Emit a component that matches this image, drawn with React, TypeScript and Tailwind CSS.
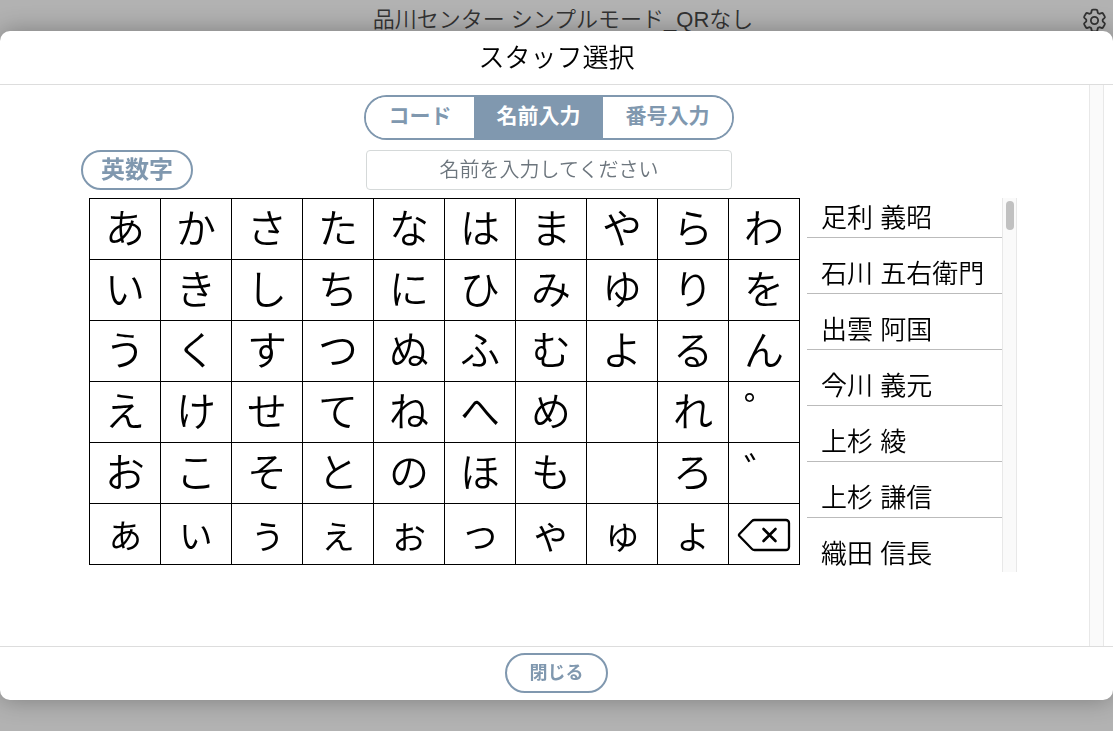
import { useState } from "react";
import { HiOutlineCog6Tooth } from "react-icons/hi2";

const KANA_ROWS = [
  ["あ", "か", "さ", "た", "な", "は", "ま", "や", "ら", "わ"],
  ["い", "き", "し", "ち", "に", "ひ", "み", "ゆ", "り", "を"],
  ["う", "く", "す", "つ", "ぬ", "ふ", "む", "よ", "る", "ん"],
  ["え", "け", "せ", "て", "ね", "へ", "め", "", "れ", "゜"],
  ["お", "こ", "そ", "と", "の", "ほ", "も", "", "ろ", "゛"],
  ["ぁ", "ぃ", "ぅ", "ぇ", "ぉ", "っ", "ゃ", "ゅ", "ょ", "BS"],
];

const STAFF = [
  "足利 義昭",
  "石川 五右衛門",
  "出雲 阿国",
  "今川 義元",
  "上杉 綾",
  "上杉 謙信",
  "織田 信長",
];

const TABS = [
  { label: "コード", width: "w-[108px]" },
  { label: "名前入力", width: "w-[129px]" },
  { label: "番号入力", width: "w-[129px]" },
];

function BackspaceIcon() {
  return (
    <svg
      width="54"
      height="36"
      viewBox="0 0 54 36"
      fill="none"
      stroke="currentColor"
      strokeWidth="2.3"
      strokeLinejoin="round"
      strokeLinecap="round"
    >
      <path d="M17.5 4H49a3 3 0 0 1 3 3V31a3 3 0 0 1-3 3H17.500Q16 34 15 33L2.400 20Q1.500 19 2.400 18L15 5Q16 4 17.500 4Z" />
      <path d="M26.500 13 38.500 25M38.500 13 26.500 25" strokeWidth="2.600" />
    </svg>
  );
}

function ModeTabs({ active, onChange }: { active: number; onChange: (i: number) => void }) {
  return (
    <div className="flex h-[45px] overflow-hidden rounded-full border-2 border-[#8098af]">
      {TABS.map((tab, i) => (
        <button
          key={tab.label}
          type="button"
          onClick={() => onChange(i)}
          className={`${tab.width} pb-1 text-[21px] font-bold ${
            i === active ? "bg-[#8098af] text-white" : "bg-white text-[#8098af]"
          }`}
        >
          {tab.label}
        </button>
      ))}
    </div>
  );
}

function KanaTable({ onKey }: { onKey: (key: string) => void }) {
  return (
    <table className="border-collapse">
      <tbody>
        {KANA_ROWS.map((row, r) => (
          <tr key={r}>
            {row.map((kana, c) => (
              <td key={c} className="h-[61px] w-[71px] border border-black p-0">
                {kana && (
                  <button
                    type="button"
                    aria-label={kana === "BS" ? "一文字削除" : undefined}
                    onClick={() => onKey(kana)}
                    className="flex h-[60px] w-[70px] items-center justify-center text-[40px] leading-none"
                  >
                    {kana === "BS" ? <BackspaceIcon /> : kana}
                  </button>
                )}
              </td>
            ))}
          </tr>
        ))}
      </tbody>
    </table>
  );
}

function StaffList({ onSelect }: { onSelect: (name: string) => void }) {
  return (
    <div className="flex h-[374px]">
      <ul className="flex w-[195px] flex-col gap-4 overflow-hidden">
        {STAFF.map((name) => (
          <li key={name} className="shrink-0 border-b border-[#bbbbbb]">
            <button
              type="button"
              onClick={() => onSelect(name)}
              className="block h-[39px] w-full pl-[14px] text-left text-[26px] leading-[41px]"
            >
              {name}
            </button>
          </li>
        ))}
      </ul>
      <div className="w-[15px] border-x border-[#e8e8e8] bg-[#fafafa] px-[3px] pt-[3px]">
        <div className="h-[29px] w-2 rounded-full bg-[#c1c1c1]" />
      </div>
    </div>
  );
}

export default function App() {
  const [tab, setTab] = useState(1);
  const [name, setName] = useState("");

  const handleKey = (key: string) => {
    setName((prev) => (key === "BS" ? prev.slice(0, -1) : prev + key));
  };

  return (
    <div className="min-h-screen bg-[#b2b2b2] font-['Liberation_Sans','Noto_Sans_CJK_JP',sans-serif] font-[350] text-black">
      <header className="flex h-10 items-center pr-1 pl-[46px] text-[#333333]">
        <h1 className="flex-1 text-center text-[22px] leading-10">品川センター シンプルモード_QRなし</h1>
        <button type="button" aria-label="設定">
          <HiOutlineCog6Tooth size={29} />
        </button>
      </header>

      <div className="fixed inset-0 flex py-[31px]">
        <div
          role="dialog"
          aria-labelledby="dialog-title"
          className="flex flex-1 flex-col overflow-hidden rounded-[10px] bg-white shadow-[0_0_25px_rgba(0,0,0,0.3)]"
        >
          <h2
            id="dialog-title"
            className="h-[54px] shrink-0 border-b border-[#dddddd] text-center text-[26px] leading-[54px]"
          >
            スタッフ選択
          </h2>

          <div className="flex min-h-0 flex-1 pr-[9px]">
            <div className="flex-1 overflow-hidden pl-[9px] pt-[10px]">
              <div className="mx-auto w-[936px]">
                <div className="flex justify-center">
                  <ModeTabs active={tab} onChange={setTab} />
                </div>

                <div className="mt-[10px] grid grid-cols-[1fr_366px_1fr]">
                  <div>
                    <button
                      type="button"
                      className="h-10 w-28 rounded-full border-2 border-[#8098af] text-2xl leading-none font-bold text-[#8098af]"
                    >
                      英数字
                    </button>
                  </div>
                  <input
                    type="text"
                    aria-label="名前"
                    value={name}
                    onChange={(e) => setName(e.target.value)}
                    placeholder="名前を入力してください"
                    className="h-10 rounded-sm border border-[#d5d9d9] text-center text-xl placeholder:text-[#6c757d]"
                  />
                </div>

                <div className="mt-2 flex items-start justify-between pl-2">
                  <KanaTable onKey={handleKey} />
                  <StaffList onSelect={setName} />
                </div>
              </div>
            </div>
            <div className="w-[15px] border-x border-[#e8e8e8] bg-[#fafafa]" />
          </div>

          <footer className="flex h-[54px] shrink-0 items-start justify-center border-t border-[#dddddd] pt-1.5">
            <button
              type="button"
              className="h-10 w-[103px] rounded-full border-2 border-[#8098af] text-lg leading-none font-bold text-[#8098af]"
            >
              閉じる
            </button>
          </footer>
        </div>
      </div>
    </div>
  );
}
